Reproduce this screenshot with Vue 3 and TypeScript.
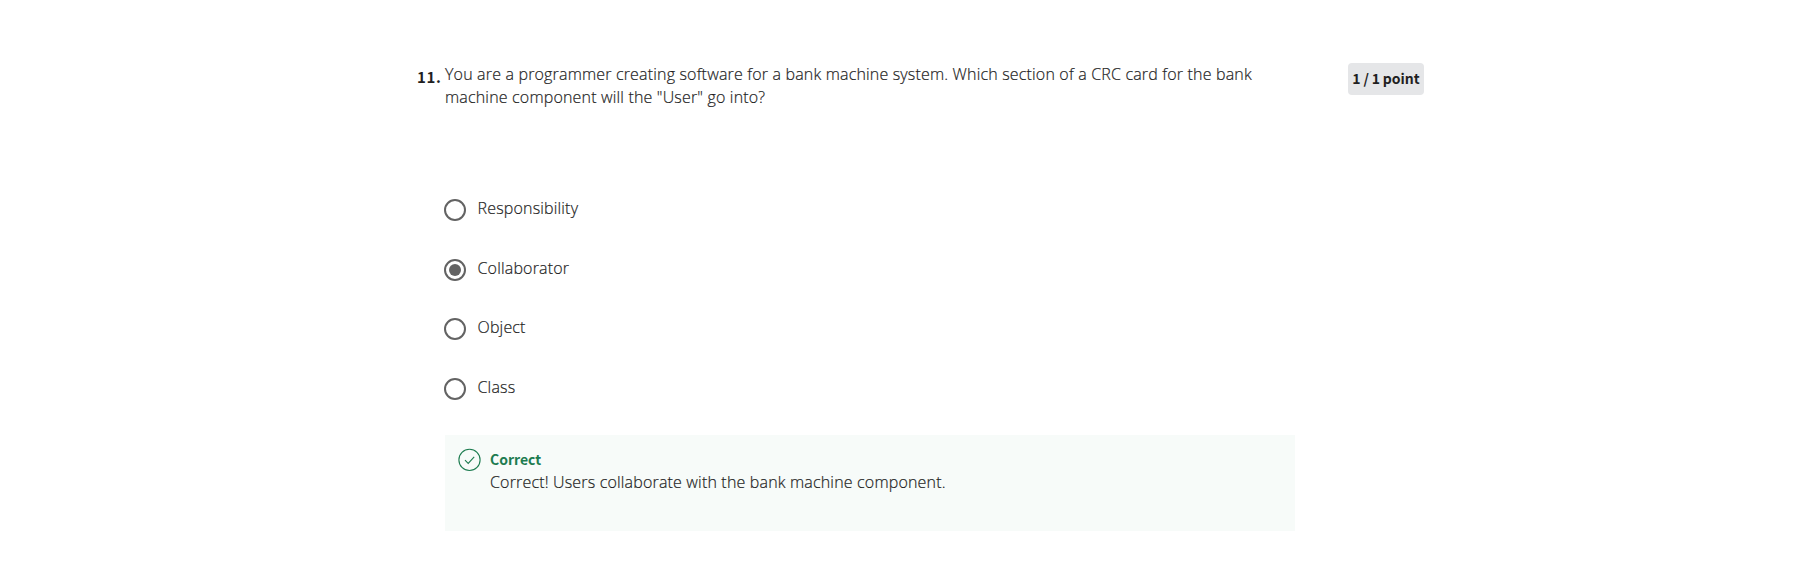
<script setup lang="ts">
import { ref } from 'vue'
const options: string[] = ['Responsibility', 'Collaborator', 'Object', 'Class']
const selected = ref('Collaborator')
</script>

<template>
  <main class="question">
    <div class="number">11.</div>
    <section class="body">
      <p class="prompt">You are a programmer creating software for a bank machine system. Which section of a CRC card for the bank<br>machine component will the "User" go into?</p>
      <div class="options">
        <div v-for="o in options" :key="o" class="option" @click="selected = o">
          <span class="radio" :class="{ on: selected === o }"></span>
          <span class="label">{{ o }}</span>
        </div>
      </div>
      <div class="feedback">
        <svg class="check" viewBox="0 0 23 23" width="23" height="23" fill="none" stroke="#1d7c50" stroke-width="1.1">
          <circle cx="11.5" cy="11.9" r="10.6" />
          <path d="M7 12.2l3.2 3.2 6-6.6" />
        </svg>
        <div class="message">
          <div class="title">Correct</div>
          <div class="detail">Correct! Users collaborate with the bank machine component.</div>
        </div>
      </div>
    </section>
    <div class="points">1 / 1 point</div>
  </main>
</template>

<style>
body { background: #fff; }
</style>
<style scoped>
.question { display: flex; align-items: flex-start; padding: 63px 0 0 417px; font-family: "Open Sans", sans-serif; font-size: 16px; line-height: 23px; color: #1f1f1f; font-weight: 300; letter-spacing: 0.173px; white-space: nowrap; }
.prompt, .label, .detail { -webkit-text-stroke: 0.2px #1f1f1f; }
.number { width: 28px; padding-top: 2px; font-family: "Noto Sans CJK SC", sans-serif; font-weight: 700; font-size: 15px; letter-spacing: 0.6px; }
.body { width: 850px; }
.prompt { margin: 0; }
.options { margin-top: 88px; }
.option { display: flex; align-items: flex-start; height: 59.6px; }
.radio { box-sizing: border-box; width: 22px; height: 22px; margin: 2px 11.5px 0 -1px; border: 2px solid #636363; border-radius: 50%; display: flex; align-items: center; justify-content: center; }
.on::after { content: ""; width: 12px; height: 12px; border-radius: 50%; background: #636363; }
.feedback { display: flex; box-sizing: border-box; height: 96px; background: #f7fbf9; padding: 13px; }
.check { margin: 0 9px 0 0; overflow: visible; }
.title { height: 23px; line-height: 23px; font-family: "Noto Sans CJK SC", sans-serif; font-weight: 700; font-size: 14px; color: #1d7c50; letter-spacing: 0; }
.points { box-sizing: border-box; width: 76px; height: 32px; margin-left: 53px; border-radius: 4px; background: #e5e6e8; font-family: "Noto Sans CJK SC", sans-serif; font-size: 14px; font-weight: 700; line-height: 31px; text-align: center; letter-spacing: 0; word-spacing: -0.3px; }
</style>
